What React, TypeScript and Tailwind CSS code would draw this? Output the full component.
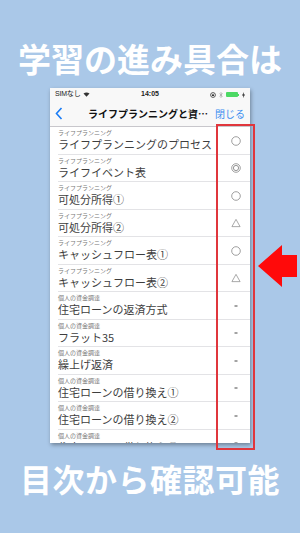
import React from "react";

type Mark = "o" | "oo" | "t" | "-";
const rows: { label: string; title: string; mark: Mark }[] = [
  { label: "ライフプランニング", title: "ライフプランニングのプロセス", mark: "o" },
  { label: "ライフプランニング", title: "ライフイベント表", mark: "oo" },
  { label: "ライフプランニング", title: "可処分所得①", mark: "o" },
  { label: "ライフプランニング", title: "可処分所得②", mark: "t" },
  { label: "ライフプランニング", title: "キャッシュフロー表①", mark: "o" },
  { label: "ライフプランニング", title: "キャッシュフロー表②", mark: "t" },
  { label: "個人の資金調達", title: "住宅ローンの返済方式", mark: "-" },
  { label: "個人の資金調達", title: "フラット35", mark: "-" },
  { label: "個人の資金調達", title: "繰上げ返済", mark: "-" },
  { label: "個人の資金調達", title: "住宅ローンの借り換え①", mark: "-" },
  { label: "個人の資金調達", title: "住宅ローンの借り換え②", mark: "-" },
  { label: "個人の資金調達", title: "住宅ローンの借り換え③", mark: "-" },
];

function Marker({ m }: { m: Mark }) {
  if (m === "-")
    return (
      <svg width="10" height="10" viewBox="0 0 10 10">
        <line x1="3.5" y1="5" x2="6.5" y2="5" stroke="#666" strokeWidth="1.2" />
      </svg>
    );
  if (m === "t")
    return (
      <svg width="11" height="10" viewBox="0 0 11 10">
        <polygon points="5.5,1 10,9 1,9" fill="none" stroke="#888" strokeWidth="0.8" />
      </svg>
    );
  return (
    <svg width="10" height="10" viewBox="0 0 10 10">
      <circle cx="5" cy="5" r="4.3" fill="none" stroke="#888" strokeWidth="0.8" />
      {m === "oo" && <circle cx="5" cy="5" r="2.6" fill="none" stroke="#888" strokeWidth="0.9" />}
    </svg>
  );
}

const font = { fontFamily: '"Liberation Sans","Noto Sans CJK JP",sans-serif' };
const jfont = { fontFamily: '"Noto Sans CJK JP","Liberation Sans",sans-serif' };

export default function App() {
  return (
    <div className="w-[300px] h-[533px] bg-[#aac8e8] flex flex-col overflow-hidden" style={font}>
      <div className="h-[88px] shrink-0 pt-[42px] text-center text-white font-bold text-[33px] leading-[33px]" style={jfont}>
        学習の進み具合は
      </div>
      <div className="relative h-[355px] shrink-0">
        <div className="ml-[50px] w-[200px] h-[355px] bg-white overflow-hidden shadow-[1px_2px_4px_rgba(0,0,0,0.35)] flex flex-col">
          {/* status bar */}
          <div className="h-[13px] shrink-0 flex items-center px-[5px] text-[7px] text-[#222] relative bg-[#f8f8f8]">
            <span className="tracking-[-0.2px]">SIMなし</span>
            <svg width="7" height="5" viewBox="0 0 7 5" className="ml-[3px]">
              <path d="M0.5 1.6 Q3.5 -0.6 6.5 1.6 L3.5 4.8 Z" fill="#333" />
            </svg>
            <span className="absolute left-0 right-0 text-center font-bold text-[7px]">14:05</span>
            <div className="ml-auto flex items-center gap-[3px]">
              <svg width="6" height="6" viewBox="0 0 6 6">
                <circle cx="3" cy="3" r="2.4" fill="none" stroke="#333" strokeWidth="0.8" />
                <rect x="2" y="2.4" width="2" height="1.6" fill="#333" />
              </svg>
              <svg width="4" height="6" viewBox="0 0 4 6">
                <path d="M0.5 1.6 L3.3 4.2 L2 5.5 L2 0.5 L3.3 1.8 L0.5 4.4" fill="none" stroke="#999" strokeWidth="0.6" />
              </svg>
              <div className="flex items-center">
                <div className="w-[12px] h-[5px] rounded-[1px] bg-[#4cd964]" />
                <div className="w-[1px] h-[2px] bg-[#4cd964]" />
              </div>
              <svg width="3" height="6" viewBox="0 0 3 6">
                <path d="M2 0 L0 3.4 L1.4 3.4 L1 6 L3 2.6 L1.6 2.6 Z" fill="#222" />
              </svg>
            </div>
          </div>
          {/* nav bar */}
          <div className="h-[26px] shrink-0 flex items-center relative bg-[#f8f8f8] border-b border-[#c8c7cc]">
            <svg width="8" height="13" viewBox="0 0 8 13" className="ml-[5px]">
              <path d="M6.5 1 L1.5 6.5 L6.5 12" fill="none" stroke="#1a7cf5" strokeWidth="1.6" />
            </svg>
            <span className="ml-[25px] text-[10px] font-bold text-[#111] whitespace-nowrap" style={jfont}>
              ライフプランニングと資…
            </span>
            <span className="ml-auto mr-[5px] text-[10px] text-[#3b8ef0]" style={jfont}>
              閉じる
            </span>
          </div>
          {/* list */}
          <div className="flex flex-col shrink-0">
            {rows.map((r, i) => (
              <div key={i} className="h-[27.5px] shrink-0 flex pl-[8px] relative">
                <div className="flex-1 pt-[2px] min-w-0 border-b border-[#e3e3e6]" style={jfont}>
                  <div className="text-[6px] leading-[7px] text-[#777] whitespace-nowrap">{r.label}</div>
                  <div className="mt-[2px] text-[11px] leading-[13px] text-[#3e3e3e] whitespace-nowrap">{r.title}</div>
                </div>
                <div className="absolute right-[9px] top-0 h-[27px] w-[10px] flex items-center justify-center">
                  <Marker m={r.mark} />
                </div>
              </div>
            ))}
          </div>
        </div>
        {/* red highlight box */}
        <div className="absolute left-[216px] top-[36px] w-[39px] h-[326px] border-2 border-[#e0363c]" />
        {/* red arrow */}
        <svg className="absolute left-[258px] top-[157px]" width="40" height="42" viewBox="0 0 40 42">
          <polygon points="0,21 24,0 24,10 39,10 39,32 24,32 24,42" fill="#ff0a0a" />
        </svg>
      </div>
      <div className="pt-[19px] text-center text-white font-bold text-[32px] leading-[32px] tracking-[0.5px]" style={jfont}>
        目次から確認可能
      </div>
    </div>
  );
}
